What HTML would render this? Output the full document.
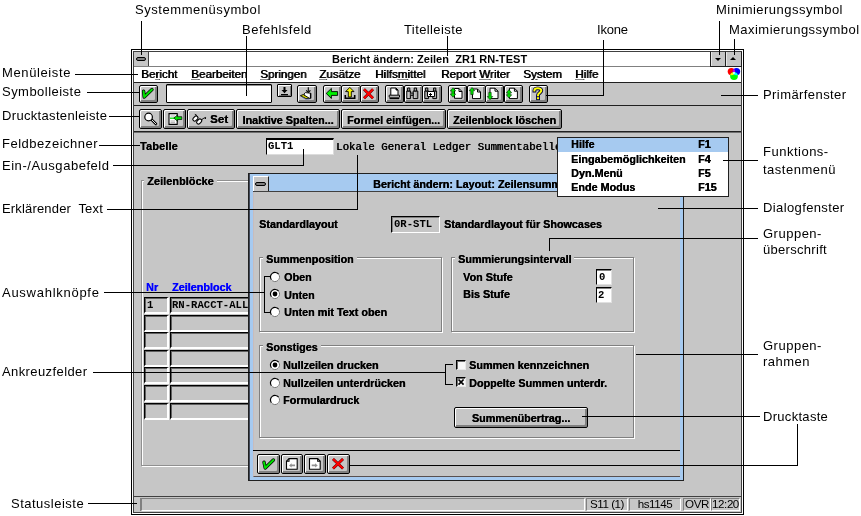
<!DOCTYPE html>
<html><head><meta charset="utf-8">
<style>
html,body{margin:0;padding:0;}
body{width:861px;height:516px;overflow:hidden;background:#fff;position:relative;font-family:"Liberation Sans",sans-serif;}
div,span,svg{position:absolute;box-sizing:border-box;}
.t,.u,.n,.m{will-change:transform;}
.u{text-shadow:0.35px 0 0 currentColor;}
.t{white-space:pre;font:13px/15px "Liberation Sans",sans-serif;color:#000;letter-spacing:0.3px;}
.u{white-space:pre;font:bold 10.8px/12px "Liberation Sans",sans-serif;color:#000;}
.n{white-space:pre;font:11.5px/12px "Liberation Sans",sans-serif;color:#000;}
.m{white-space:pre;font:bold 10.6px/13px "Liberation Mono",monospace;color:#000;}
.h{background:#000;height:1px;}
.v{background:#000;width:1px;}
.b{border:1px solid #000;border-radius:2px;background:#c6c6c6;box-shadow:inset 1px 1px #fff,inset -2px -2px #808080;}
.f{background:#fff;border-top:2px solid #000;border-left:1px solid #000;border-right:1px solid #e8e8e8;border-bottom:1px solid #e8e8e8;}
.fg{background:#c6c6c6;border-top:1px solid #000;border-left:1px solid #000;border-right:1px solid #fff;border-bottom:1px solid #fff;}
.grp{border:1px solid #808080;box-shadow:1px 1px #fff,inset 1px 1px #fff;}
.cell{background:#c6c6c6;border-top:1px solid #000;border-left:1px solid #000;border-right:2px solid #fff;border-bottom:2px solid #fff;box-shadow:inset 1px 1px #606060;}
.rad{width:10px;height:10px;border-radius:50%;background:#fff;border:1px solid;border-color:#404040 #fff #fff #404040;}
.rad.on::after{content:"";position:absolute;left:2px;top:2px;width:4px;height:4px;border-radius:50%;background:#000;}
.ul{position:relative;text-decoration:underline;text-decoration-color:#888;}
.chk{width:10px;height:10px;background:#f8f8f8;border-style:solid;border-width:1px;border-color:#000 #e8e8e8 #e8e8e8 #000;box-shadow:inset 1px 1px #707070;}
</style></head><body>
<div class="t" style="left:135px;top:2px;letter-spacing:0.55px;">Systemmenüsymbol</div>
<div class="t" style="left:242px;top:22px;letter-spacing:0.5px;">Befehlsfeld</div>
<div class="t" style="left:404px;top:22px;letter-spacing:0.4px;">Titelleiste</div>
<div class="t" style="left:597px;top:22px;letter-spacing:-0.2px;">Ikone</div>
<div class="t" style="left:716px;top:2px;letter-spacing:0.47px;">Minimierungssymbol</div>
<div class="t" style="left:729px;top:22px;letter-spacing:0.47px;">Maximierungssymbol</div>
<div class="t" style="left:2px;top:65px;letter-spacing:0.62px;">Menüleiste</div>
<div class="t" style="left:2px;top:84px;letter-spacing:0.47px;">Symbolleiste</div>
<div class="t" style="left:2px;top:108px;letter-spacing:0.33px;">Drucktastenleiste</div>
<div class="t" style="left:2px;top:136px;letter-spacing:0.52px;">Feldbezeichner</div>
<div class="t" style="left:2px;top:158px;letter-spacing:0.53px;">Ein-/Ausgabefeld</div>
<div class="t" style="left:2px;top:201px;letter-spacing:0.17px;">Erklärender  Text</div>
<div class="t" style="left:2px;top:285px;letter-spacing:0.73px;">Auswahlknöpfe</div>
<div class="t" style="left:2px;top:364px;letter-spacing:0.4px;">Ankreuzfelder</div>
<div class="t" style="left:11px;top:496px;letter-spacing:0.5px;">Statusleiste</div>
<div class="t" style="left:763px;top:87px;letter-spacing:0.42px;">Primärfenster</div>
<div class="t" style="left:763px;top:144px;letter-spacing:0.5px;">Funktions-</div>
<div class="t" style="left:763px;top:162px;letter-spacing:0.5px;">tastenmenü</div>
<div class="t" style="left:763px;top:200px;letter-spacing:0.38px;">Dialogfenster</div>
<div class="t" style="left:763px;top:226px;letter-spacing:0.5px;">Gruppen-</div>
<div class="t" style="left:763px;top:242px;letter-spacing:0.3px;">überschrift</div>
<div class="t" style="left:763px;top:338px;letter-spacing:0.5px;">Gruppen-</div>
<div class="t" style="left:763px;top:354px;letter-spacing:0.5px;">rahmen</div>
<div class="t" style="left:763px;top:409px;letter-spacing:0.3px;">Drucktaste</div>
<div class="" style="left:131px;top:49px;width:613px;height:466px;border:1px solid #000;background:#fff"></div>
<div class="" style="left:133px;top:51px;width:609px;height:462px;border:1px solid #404040;background:#c6c6c6"></div>
<div class="" style="left:134px;top:52px;width:607px;height:14px;background:#fff"></div>
<div class="h" style="left:134px;top:66px;width:607px;background:#808080"></div>
<div class="" style="left:134px;top:52px;width:15px;height:14px;background:#c6c6c6;border-right:1px solid #404040"></div>
<div class="" style="left:136px;top:57px;width:10px;height:4px;border:1px solid #000;border-radius:2px;background:#808080"></div>
<div class="u" style="left:332px;top:53px;letter-spacing:0.04px;font-size:11px;text-shadow:none">Bericht ändern: Zeilen  ZR1 RN-TEST</div>
<div class="" style="left:710px;top:51px;width:16px;height:16px;background:#c6c6c6;border:1px solid #202020;border-top-color:#404040;box-shadow:inset 1px 0 #e8e8e8"></div>
<div class="" style="left:725px;top:51px;width:17px;height:16px;background:#c6c6c6;border:1px solid #202020;border-top-color:#404040;box-shadow:inset 1px 0 #e8e8e8"></div>
<div class="" style="left:715px;top:58px;width:0px;height:0px;border-left:3.2px solid transparent;border-right:3.2px solid transparent;border-top:3.4px solid #000"></div>
<div class="" style="left:730px;top:57px;width:0px;height:0px;border-left:3.2px solid transparent;border-right:3.2px solid transparent;border-bottom:3.4px solid #000"></div>
<div class="" style="left:134px;top:67px;width:607px;height:15px;background:#fff"></div>
<div class="h" style="left:134px;top:82px;width:607px;background:#202020"></div>
<div class="u" style="left:141px;top:67.5px;font-weight:normal;font-size:11.6px;text-shadow:0.7px 0 0 #000">Be<span class="ul">r</span>icht</div>
<div class="u" style="left:190.5px;top:67.5px;font-weight:normal;font-size:11.6px;text-shadow:0.7px 0 0 #000"><span class="ul">B</span>earbeiten</div>
<div class="u" style="left:260px;top:67.5px;font-weight:normal;font-size:11.6px;text-shadow:0.7px 0 0 #000"><span class="ul">S</span>pringen</div>
<div class="u" style="left:319px;top:67.5px;font-weight:normal;font-size:11.6px;text-shadow:0.7px 0 0 #000"><span class="ul">Z</span>usätze</div>
<div class="u" style="left:375px;top:67.5px;font-weight:normal;font-size:11.6px;text-shadow:0.7px 0 0 #000">Hilfs<span class="ul">m</span>ittel</div>
<div class="u" style="left:441px;top:67.5px;font-weight:normal;font-size:11.6px;text-shadow:0.7px 0 0 #000">Report <span class="ul">W</span>riter</div>
<div class="u" style="left:523px;top:67.5px;font-weight:normal;font-size:11.6px;text-shadow:0.7px 0 0 #000">S<span class="ul">y</span>stem</div>
<div class="u" style="left:575px;top:67.5px;font-weight:normal;font-size:11.6px;text-shadow:0.7px 0 0 #000"><span class="ul">H</span>ilfe</div>
<svg style="left:727px;top:67px" width="15" height="15" viewBox="0 0 15 15"><defs><clipPath id="cr"><circle cx="4.4" cy="4.6" r="3.7" fill="#000"/></clipPath><clipPath id="cb"><circle cx="9.5" cy="4.6" r="3.7" fill="#000"/></clipPath></defs><circle cx="4.4" cy="4.6" r="3.7" fill="#ff0000"/><circle cx="9.5" cy="4.6" r="3.7" fill="#0000ff"/><circle cx="7" cy="9.1" r="3.9" fill="#00ff00"/><g clip-path="url(#cr)"><circle cx="9.5" cy="4.6" r="3.7" fill="#c000e0"/><circle cx="7" cy="9.1" r="3.9" fill="#ffff00"/></g><g clip-path="url(#cb)"><circle cx="7" cy="9.1" r="3.9" fill="#00ffff"/></g><g clip-path="url(#cr)"><g clip-path="url(#cb)"><circle cx="7" cy="9.1" r="3.9" fill="#ffffff"/></g></g></svg>
<div class="h" style="left:134px;top:105px;width:607px;background:#202020"></div>
<div class="b" style="left:139px;top:85px;width:19px;height:18px"><svg style="left:-1px;top:-1px" width="19" height="18" viewBox="0 0 19 18"><path d="M4.6 6.3 L5.2 12 L13 4.6" fill="none" stroke="#000" stroke-width="3.4" stroke-linecap="round" stroke-linejoin="round"/><path d="M4.6 6.3 L5.2 12 L13 4.6" fill="none" stroke="#00e000" stroke-width="2" stroke-linecap="round" stroke-linejoin="round"/></svg></div>
<div class="" style="left:166px;top:84px;width:106px;height:19px;background:#fff;border:1px solid #000;border-radius:1px;box-shadow:inset 0 1px #909090"></div>
<div class="" style="left:277px;top:84px;width:15px;height:13px;border:1px solid #000;border-radius:1px;background:#c6c6c6;box-shadow:inset 1px 1px #fff,inset -1px -1px #808080"><svg style="left:-1px;top:-1px" width="15" height="13" viewBox="0 0 15 13"><path d="M4.5 6 h6 l-3 3.2 z" fill="#000"/><rect x="6.5" y="3" width="2" height="3.5" fill="#000"/><rect x="4" y="10" width="7" height="1.3" fill="#000"/></svg></div>
<div class="b" style="left:297px;top:85px;width:20px;height:18px"><svg style="left:-1px;top:-1px" width="20" height="18" viewBox="0 0 20 18"><path d="M11.3 2.3 V6.6" stroke="#000" stroke-width="1.1"/><path d="M9.2 5.3 L11.3 7.5 L13.4 5.3" fill="none" stroke="#000" stroke-width="1.1"/><path d="M7 9 L8.3 7.6 L13.6 8.2 V13.4 H8.5 Z" fill="#fff" stroke="#000" stroke-width="0.9"/><path d="M13.6 8.2 V13.4" stroke="#000" stroke-width="1.4"/><path d="M3.4 10.7 L6.3 9.5 L12.4 13.3 L8.9 13.6 Z" fill="#d0d000" stroke="#000" stroke-width="0.9" stroke-linejoin="round"/><path d="M5 12.2 L8.9 14.2 L12.4 14" fill="none" stroke="#6070a0" stroke-width="0.8"/></svg></div>
<div class="b" style="left:323px;top:85px;width:19px;height:18px"><svg style="left:-1px;top:-1px" width="19" height="18" viewBox="0 0 19 18"><path d="M3.2 8.4 L8.4 3.4 V6.6 H14.6 V10.4 H8.4 V13.5 Z" fill="#00f000" stroke="#000" stroke-width="0.9" stroke-linejoin="round"/></svg></div>
<div class="b" style="left:341px;top:85px;width:20px;height:18px"><svg style="left:-1px;top:-1px" width="20" height="18" viewBox="0 0 20 18"><path d="M4.3 10 V13.3 H13.7 V10" fill="none" stroke="#000" stroke-width="1.6"/><path d="M8.8 2.4 L13 6.6 H10.3 V12 H7.3 V6.6 H4.6 Z" fill="#f8f800" stroke="#000" stroke-width="0.9" stroke-linejoin="round"/></svg></div>
<div class="b" style="left:360px;top:85px;width:19px;height:18px"><svg style="left:-1px;top:-1px" width="19" height="18" viewBox="0 0 19 18"><path d="M4 4.3 L13 13.3 M13 4.3 L4 13.3" stroke="#400000" stroke-width="2.8"/><path d="M4 4.3 L13 13.3 M13 4.3 L4 13.3" stroke="#ff0000" stroke-width="2"/></svg></div>
<div class="b" style="left:385px;top:85px;width:19px;height:18px"><svg style="left:-1px;top:-1px" width="19" height="18" viewBox="0 0 19 18"><path d="M5.8 3 H11 L13 5 V10.5 H5.8 Z" fill="#fff" stroke="#000" stroke-width="1"/><path d="M11 3 V5 H13" fill="#000" stroke="#000" stroke-width="1"/><path d="M4.2 10.2 H14.5 V12.2 H4.2 Z" fill="#fff" stroke="#000" stroke-width="1"/><path d="M4.5 13.6 H14.3" stroke="#000" stroke-width="1.2"/></svg></div>
<div class="b" style="left:404px;top:85px;width:19px;height:18px"><svg style="left:-1px;top:-1px" width="19" height="18" viewBox="0 0 19 18"><path d="M2.8 6 H6.6 V13.6 H2.8 Z M9.2 6 H13.8 V13.6 H9.2 Z" fill="#a8a8a8" stroke="#000" stroke-width="1"/><path d="M3.6 3 H5.8 V6 H3.6 Z M10.2 3 H12.6 V6 H10.2 Z" fill="#a8a8a8" stroke="#000" stroke-width="1"/><path d="M6.6 8 H9.2 V10.5 H6.6" fill="#808080" stroke="#000" stroke-width="0.8"/><path d="M4.2 7 V13 M10.8 7 V13" stroke="#e0e0e0" stroke-width="0.8"/></svg></div>
<div class="b" style="left:422px;top:85px;width:20px;height:18px"><svg style="left:-1px;top:-1px" width="20" height="18" viewBox="0 0 20 18"><path d="M2.8 6 H6.6 V13.6 H2.8 Z M10.8 6 H14.6 V13.6 H10.8 Z" fill="#a8a8a8" stroke="#000" stroke-width="1"/><path d="M3.6 3 H5.8 V6 H3.6 Z M11.6 3 H13.8 V6 H11.6 Z" fill="#a8a8a8" stroke="#000" stroke-width="1"/><path d="M5.5 6.5 H12.5 V11.5 H5.5 Z" fill="#fff" stroke="#000" stroke-width="1"/><rect x="7" y="9" width="3" height="1" fill="#000" shape-rendering="crispEdges"/><rect x="8" y="8" width="1" height="3" fill="#000" shape-rendering="crispEdges"/></svg></div>
<div class="b" style="left:448px;top:85px;width:19px;height:18px"><svg style="left:-1px;top:-1px" width="19" height="18" viewBox="0 0 19 18"><path d="M6.5 3.5 H11 L14 6.5 V13.3 H6.5 Z" fill="#fff" stroke="#000" stroke-width="1"/><path d="M11 3.5 V6.5 H14" fill="none" stroke="#000" stroke-width="1"/><path d="M5 2.8 L7.7 6.0 H6.2 V9.0 H7.7 L5 12.2 L2.3 9.0 H3.8 V6.0 H2.3 Z" fill="#00e000" stroke="#003000" stroke-width="0.6"/></svg></div>
<div class="b" style="left:467px;top:85px;width:19px;height:18px"><svg style="left:-1px;top:-1px" width="19" height="18" viewBox="0 0 19 18"><path d="M5.5 4 H10.5 L13.5 7 V13.6 H5.5 Z" fill="#fff" stroke="#000" stroke-width="1"/><path d="M10.5 4 V7 H13.5" fill="none" stroke="#000" stroke-width="1"/><path d="M5 2.5 L7.7 5.7 H6.2 V9.5 H3.8 V5.7 H2.3 Z" fill="#00e000" stroke="#003000" stroke-width="0.6"/></svg></div>
<div class="b" style="left:485px;top:85px;width:19px;height:18px"><svg style="left:-1px;top:-1px" width="19" height="18" viewBox="0 0 19 18"><path d="M5 3.2 H10 L13 6.2 V13.6 H5 Z" fill="#fff" stroke="#000" stroke-width="1"/><path d="M10 3.2 V6.2 H13" fill="none" stroke="#000" stroke-width="1"/><path d="M5 14.7 L7.7 11.5 H6.2 V7.4 H3.8 V11.5 H2.3 Z" fill="#00e000" stroke="#003000" stroke-width="0.6"/></svg></div>
<div class="b" style="left:504px;top:85px;width:19px;height:18px"><svg style="left:-1px;top:-1px" width="19" height="18" viewBox="0 0 19 18"><path d="M5.5 3.2 H10.4 L13.4 6.2 V13.6 H5.5 Z" fill="#fff" stroke="#000" stroke-width="1"/><path d="M10.4 3.2 V6.2 H13.4" fill="none" stroke="#000" stroke-width="1"/><path d="M5 4.6 L7.7 7.8 H6.2 V9.8 H7.7 L5 13 L2.3 9.8 H3.8 V7.8 H2.3 Z" fill="#00e000" stroke="#003000" stroke-width="0.6"/></svg></div>
<div class="b" style="left:529px;top:85px;width:19px;height:18px"><svg style="left:-1px;top:-1px" width="19" height="18" viewBox="0 0 19 18"><path d="M5.4 5.6 C5.4 2.6, 12.3 2.6, 12.3 5.6 C12.3 7.8, 9 8, 9 10.3" fill="none" stroke="#000040" stroke-width="3.8" stroke-linecap="square"/><path d="M9 13.2 h0.1" stroke="#000040" stroke-width="3.8" stroke-linecap="square"/><path d="M5.4 5.6 C5.4 2.6, 12.3 2.6, 12.3 5.6 C12.3 7.8, 9 8, 9 10.3" fill="none" stroke="#ffff00" stroke-width="2" stroke-linecap="square"/><path d="M9 13.2 h0.1" stroke="#ffff00" stroke-width="2" stroke-linecap="square"/></svg></div>
<div class="h" style="left:134px;top:131px;width:607px;background:#202020"></div>
<div class="h" style="left:134px;top:132px;width:607px;background:#707070"></div>
<div class="b" style="left:139px;top:109px;width:23px;height:20px"><svg style="left:-1px;top:-1px" width="23" height="20" viewBox="0 0 23 20"><path d="M12.3 10.3 L17 15" stroke="#000" stroke-width="2.6" stroke-linecap="round"/><path d="M12.3 10.3 L17 15" stroke="#fff" stroke-width="0.9" stroke-linecap="round"/><circle cx="9.6" cy="8" r="3.8" fill="#fff" stroke="#000" stroke-width="1.2"/></svg></div>
<div class="b" style="left:163px;top:109px;width:23px;height:20px"><svg style="left:-1px;top:-1px" width="23" height="20" viewBox="0 0 23 20"><path d="M6 4.6 H14.2 V15.4 H6 Z" fill="#fff" stroke="#000" stroke-width="1.1"/><path d="M7.5 7 H12 M7.5 12 H12 M7.5 13.6 H12" stroke="#a0a0a0" stroke-width="0.8"/><path d="M7 9.2 H12" stroke="#00e000" stroke-width="1.3"/><path d="M10.8 9.1 L14.6 5.9 V7.7 H18.8 V10.5 H14.6 V12.3 Z" fill="#00e000" stroke="#000" stroke-width="0.7" stroke-linejoin="round"/></svg></div>
<div class="b" style="left:187px;top:109px;width:48px;height:20px"><svg style="left:-1px;top:-1px" width="22" height="20" viewBox="0 0 22 20"><rect x="5.6" y="7.8" width="5.6" height="3.6" rx="1.6" transform="rotate(-45 8.4 9.6)" fill="#fff" stroke="#000" stroke-width="1.1"/><rect x="9.4" y="10.7" width="5.6" height="3.6" rx="1.6" transform="rotate(-45 12.2 12.5)" fill="#fff" stroke="#000" stroke-width="1.1"/><path d="M10 6.5 L7.8 5.3 M14 11.2 L16.2 9.6 L18.6 8.4 L18.4 10" fill="none" stroke="#000" stroke-width="1"/></svg></div>
<div class="u" style="left:210px;top:113px;font-size:11.6px">Set</div>
<div class="b u" style="left:236px;top:109px;width:104px;height:20px;text-align:center;padding-top:4px">Inaktive Spalten...</div>
<div class="b u" style="left:341px;top:109px;width:105px;height:20px;text-align:center;padding-top:4px">Formel einfügen...</div>
<div class="b u" style="left:447px;top:109px;width:115px;height:20px;text-align:center;padding-top:4px">Zeilenblock löschen</div>
<div class="u" style="left:140px;top:140px;letter-spacing:0.2px">Tabelle</div>
<div class="" style="left:266px;top:138px;width:68px;height:17px;background:#fff;border-top:2px solid #000;border-left:1px solid #000;border-right:1px solid #dcdcdc;border-bottom:1px solid #dcdcdc"></div>
<div class="m" style="left:268px;top:140px;">GLT1</div>
<div class="m" style="left:336px;top:141px;font-size:10.72px;font-weight:normal;text-shadow:0.45px 0 0 #000">Lokale General Ledger Summentabelle</div>
<div class="" style="left:141px;top:180px;width:130px;height:286px;border:1px solid #909090;box-shadow:inset 1px 1px #fff,1px 1px #fff"></div>
<div class="u" style="left:144px;top:175px;background:#c6c6c6;letter-spacing:0.1px"> Zeilenblöcke </div>
<div class="u" style="left:146px;top:281px;color:#0000ff">Nr</div>
<div class="u" style="left:172px;top:281px;color:#0000ff">Zeilenblock</div>
<div class="cell" style="left:144px;top:297px;width:25px;height:17px;"></div>
<div class="cell" style="left:170px;top:297px;width:95px;height:17px;"></div>
<div class="cell" style="left:144px;top:315px;width:25px;height:17px;"></div>
<div class="cell" style="left:170px;top:315px;width:95px;height:17px;"></div>
<div class="cell" style="left:144px;top:332px;width:25px;height:17px;"></div>
<div class="cell" style="left:170px;top:332px;width:95px;height:17px;"></div>
<div class="cell" style="left:144px;top:350px;width:25px;height:17px;"></div>
<div class="cell" style="left:170px;top:350px;width:95px;height:17px;"></div>
<div class="cell" style="left:144px;top:367px;width:25px;height:17px;"></div>
<div class="cell" style="left:170px;top:367px;width:95px;height:17px;"></div>
<div class="cell" style="left:144px;top:385px;width:25px;height:17px;"></div>
<div class="cell" style="left:170px;top:385px;width:95px;height:17px;"></div>
<div class="cell" style="left:144px;top:403px;width:25px;height:17px;"></div>
<div class="cell" style="left:170px;top:403px;width:95px;height:17px;"></div>
<div class="m" style="left:147px;top:299px;">1</div>
<div class="m" style="left:172px;top:299px;">RN-RACCT-ALL</div>
<div class="" style="left:248px;top:173px;width:436px;height:308px;border:1px solid #202020;background:#a6caf0;box-shadow:inset 1px 0 #404858"></div>
<div class="" style="left:253px;top:177px;width:427px;height:300px;background:#c6c6c6;border-left:1px solid #c8bcbc;border-bottom:1px solid #585050"></div>
<div class="" style="left:253px;top:176px;width:427px;height:15px;background:#a6caf0"></div>
<div class="h" style="left:253px;top:191px;width:427px;background:#404040"></div>
<div class="" style="left:253px;top:176px;width:16px;height:15px;background:#c6c6c6;border-right:1px solid #202020;border-top:1px solid #fff;border-left:1px solid #fff"></div>
<div class="" style="left:255px;top:182px;width:11px;height:4px;border:1px solid #000;border-radius:2px;background:#808080"></div>
<div class="u" style="left:373px;top:178px;">Bericht ändern: Layout: Zeilensummenposition</div>
<div class="u" style="left:259px;top:218px;">Standardlayout</div>
<div class="" style="left:391px;top:216px;width:49px;height:17px;border-top:1px solid #000;border-left:1px solid #000;border-right:1px solid #fff;border-bottom:1px solid #fff;background:#c6c6c6;box-shadow:inset 1px 1px #808080"></div>
<div class="m" style="left:394px;top:218px;">0R-STL</div>
<div class="u" style="left:444px;top:218px;">Standardlayout für Showcases</div>
<div class="" style="left:259px;top:257px;width:183px;height:75px;border:1px solid #808080;box-shadow:inset 1px 1px #fff,1px 1px #fff"></div>
<div class="u" style="left:263px;top:253px;background:#c6c6c6"> Summenposition </div>
<div class="" style="left:451px;top:257px;width:183px;height:75px;border:1px solid #808080;box-shadow:inset 1px 1px #fff,1px 1px #fff"></div>
<div class="u" style="left:455px;top:253px;background:#c6c6c6"> Summierungsintervall </div>
<div class="" style="left:259px;top:345px;width:375px;height:93px;border:1px solid #808080;box-shadow:inset 1px 1px #fff,1px 1px #fff"></div>
<div class="u" style="left:263px;top:341px;background:#c6c6c6"> Sonstiges </div>
<svg style="left:269.4px;top:271px" width="12" height="12" viewBox="0 0 12 12"><circle cx="6" cy="6" r="4.5" fill="#fff" stroke="#fff" stroke-width="1.2"/><path d="M2.4 8.8 A4.5 4.5 0 1 1 9.6 3.2" fill="none" stroke="#000" stroke-width="1.2"/><path d="M9.6 3.2 A4.5 4.5 0 0 1 2.4 8.8" fill="none" stroke="#505050" stroke-width="0.8"/></svg>
<div class="u" style="left:284px;top:271px;">Oben</div>
<svg style="left:269.4px;top:288.2px" width="12" height="12" viewBox="0 0 12 12"><circle cx="6" cy="6" r="4.5" fill="#fff" stroke="#fff" stroke-width="1.2"/><path d="M2.4 8.8 A4.5 4.5 0 1 1 9.6 3.2" fill="none" stroke="#000" stroke-width="1.2"/><path d="M9.6 3.2 A4.5 4.5 0 0 1 2.4 8.8" fill="none" stroke="#505050" stroke-width="0.8"/><circle cx="6" cy="6" r="2.4" fill="#000"/></svg>
<div class="u" style="left:284px;top:289px;">Unten</div>
<svg style="left:269.4px;top:305.8px" width="12" height="12" viewBox="0 0 12 12"><circle cx="6" cy="6" r="4.5" fill="#fff" stroke="#fff" stroke-width="1.2"/><path d="M2.4 8.8 A4.5 4.5 0 1 1 9.6 3.2" fill="none" stroke="#000" stroke-width="1.2"/><path d="M9.6 3.2 A4.5 4.5 0 0 1 2.4 8.8" fill="none" stroke="#505050" stroke-width="0.8"/></svg>
<div class="u" style="left:284px;top:306px;">Unten mit Text oben</div>
<div class="u" style="left:463px;top:271px;">Von Stufe</div>
<div class="u" style="left:463px;top:288px;">Bis Stufe</div>
<div class="" style="left:596px;top:269px;width:16px;height:16px;background:#fff;border-top:1px solid #000;border-left:1px solid #000;border-right:1px solid #e0e0e0;border-bottom:1px solid #e0e0e0;box-shadow:inset 0 1px #808080"></div>
<div class="" style="left:596px;top:287px;width:16px;height:16px;background:#fff;border-top:1px solid #000;border-left:1px solid #000;border-right:1px solid #e0e0e0;border-bottom:1px solid #e0e0e0;box-shadow:inset 0 1px #808080"></div>
<div class="m" style="left:599px;top:271px;">0</div>
<div class="m" style="left:598px;top:289px;">2</div>
<svg style="left:269.4px;top:359px" width="12" height="12" viewBox="0 0 12 12"><circle cx="6" cy="6" r="4.5" fill="#fff" stroke="#fff" stroke-width="1.2"/><path d="M2.4 8.8 A4.5 4.5 0 1 1 9.6 3.2" fill="none" stroke="#000" stroke-width="1.2"/><path d="M9.6 3.2 A4.5 4.5 0 0 1 2.4 8.8" fill="none" stroke="#505050" stroke-width="0.8"/><circle cx="6" cy="6" r="2.4" fill="#000"/></svg>
<div class="u" style="left:283px;top:359px;">Nullzeilen drucken</div>
<svg style="left:269.4px;top:376.5px" width="12" height="12" viewBox="0 0 12 12"><circle cx="6" cy="6" r="4.5" fill="#fff" stroke="#fff" stroke-width="1.2"/><path d="M2.4 8.8 A4.5 4.5 0 1 1 9.6 3.2" fill="none" stroke="#000" stroke-width="1.2"/><path d="M9.6 3.2 A4.5 4.5 0 0 1 2.4 8.8" fill="none" stroke="#505050" stroke-width="0.8"/></svg>
<div class="u" style="left:283px;top:377px;">Nullzeilen unterdrücken</div>
<svg style="left:269.4px;top:394px" width="12" height="12" viewBox="0 0 12 12"><circle cx="6" cy="6" r="4.5" fill="#fff" stroke="#fff" stroke-width="1.2"/><path d="M2.4 8.8 A4.5 4.5 0 1 1 9.6 3.2" fill="none" stroke="#000" stroke-width="1.2"/><path d="M9.6 3.2 A4.5 4.5 0 0 1 2.4 8.8" fill="none" stroke="#505050" stroke-width="0.8"/></svg>
<div class="u" style="left:283px;top:394px;">Formulardruck</div>
<div class="chk" style="left:456px;top:360px;width:10px;height:10px;"></div>
<div class="u" style="left:469px;top:359px;">Summen kennzeichnen</div>
<div class="chk" style="left:456px;top:377px;width:10px;height:10px;"><svg style="left:0px;top:0px" width="8" height="8" viewBox="0 0 8 8"><path d="M1.5 1.5 L6.6 6.6 M6.6 1.5 L1.5 6.6" stroke="#000" stroke-width="1.7"/></svg></div>
<div class="u" style="left:469px;top:377px;">Doppelte Summen unterdr.</div>
<div class="b u" style="left:454px;top:407px;width:134px;height:21px;text-align:center;padding-top:4px">Summenübertrag...</div>
<div class="h" style="left:253px;top:450px;width:427px;background:#000"></div>
<div class="b" style="left:257px;top:454px;width:23px;height:20px"><svg style="left:-1px;top:-1px" width="23" height="20" viewBox="0 0 23 20"><path d="M7 8.2 L8.2 14 L16.4 6" fill="none" stroke="#000" stroke-width="3.4" stroke-linecap="round" stroke-linejoin="round"/><path d="M7 8.2 L8.2 14 L16.4 6" fill="none" stroke="#00e000" stroke-width="2" stroke-linecap="round" stroke-linejoin="round"/></svg></div>
<div class="b" style="left:281px;top:454px;width:22px;height:20px"><svg style="left:-1px;top:-1px" width="22" height="20" viewBox="0 0 22 20"><path d="M8 4.6 H16.2 V15.3 H5.5 V7.2 Z" fill="#fff" stroke="#000" stroke-width="1.1" stroke-linejoin="round"/><path d="M8 4.6 V7.2 H5.5" fill="none" stroke="#000" stroke-width="1.1"/><path d="M8 11.4 L10.6 9.2 V10.6 H14 V12.2 H10.6 V13.6 Z" fill="#909090"/></svg></div>
<div class="b" style="left:304px;top:454px;width:22px;height:20px"><svg style="left:-1px;top:-1px" width="22" height="20" viewBox="0 0 22 20"><path d="M5.5 4.6 H13.7 L16.2 7.2 V15.3 H5.5 Z" fill="#fff" stroke="#000" stroke-width="1.1" stroke-linejoin="round"/><path d="M13.7 4.6 V7.2 H16.2" fill="none" stroke="#000" stroke-width="1.1"/><path d="M13.7 11.4 L11.1 9.2 V10.6 H7.7 V12.2 H11.1 V13.6 Z" fill="#909090"/></svg></div>
<div class="b" style="left:327px;top:454px;width:23px;height:20px"><svg style="left:-1px;top:-1px" width="23" height="20" viewBox="0 0 23 20"><path d="M6 5 L16 14.5 M16 5 L6 14.5" stroke="#400000" stroke-width="2.8"/><path d="M6 5 L16 14.5 M16 5 L6 14.5" stroke="#ff0000" stroke-width="2"/></svg></div>
<div class="" style="left:557px;top:137px;width:172px;height:60px;border:1px solid #202020;background:#fff"></div>
<div class="" style="left:558px;top:138px;width:170px;height:14px;background:#a6caf0"></div>
<div class="u" style="left:571px;top:138px;">Hilfe</div>
<div class="u" style="left:698px;top:138px;">F1</div>
<div class="u" style="left:571px;top:153px;">Eingabemöglichkeiten</div>
<div class="u" style="left:698px;top:153px;">F4</div>
<div class="u" style="left:571px;top:167px;">Dyn.Menü</div>
<div class="u" style="left:698px;top:167px;">F5</div>
<div class="u" style="left:571px;top:181px;">Ende Modus</div>
<div class="u" style="left:698px;top:181px;">F15</div>
<div class="h" style="left:134px;top:496px;width:607px;background:#404040"></div>
<div class="" style="left:134px;top:497px;width:607px;height:15px;background:#c6c6c6"></div>
<div class="" style="left:134px;top:498px;width:7px;height:13px;background:#c8c8c8;border-right:1px solid #808080"></div>
<div class="n" style="left:141px;top:498px;width:444px;height:13px;background:#c6c6c6;border-top:1px solid #808080;border-left:1px solid #808080;border-bottom:1px solid #fff;border-right:1px solid #fff;text-align:center;line-height:10px;font-size:11.6px;letter-spacing:-0.45px"></div>
<div class="n" style="left:586px;top:498px;width:42px;height:13px;background:#c6c6c6;border-top:1px solid #808080;border-left:1px solid #808080;border-bottom:1px solid #fff;border-right:1px solid #fff;text-align:center;line-height:10px;font-size:11.6px;letter-spacing:-0.45px">S11 (1)</div>
<div class="n" style="left:629px;top:498px;width:52px;height:13px;background:#c6c6c6;border-top:1px solid #808080;border-left:1px solid #808080;border-bottom:1px solid #fff;border-right:1px solid #fff;text-align:center;line-height:10px;font-size:11.6px;letter-spacing:-0.45px">hs1145</div>
<div class="n" style="left:683px;top:498px;width:28px;height:13px;background:#c6c6c6;border-top:1px solid #808080;border-left:1px solid #808080;border-bottom:1px solid #fff;border-right:1px solid #fff;text-align:center;line-height:10px;font-size:11.6px;letter-spacing:-0.45px">OVR</div>
<div class="n" style="left:711px;top:498px;width:29px;height:13px;background:#c6c6c6;border-top:1px solid #808080;border-left:1px solid #808080;border-bottom:1px solid #fff;border-right:1px solid #fff;text-align:center;line-height:10px;font-size:11.6px;letter-spacing:-0.45px">12:20</div>
<div class="v" style="left:141px;top:21px;height:34px"></div>
<div class="v" style="left:246px;top:36px;height:60px"></div>
<div class="v" style="left:447px;top:36px;height:20px"></div>
<div class="v" style="left:603px;top:40px;height:56px"></div>
<div class="h" style="left:546px;top:95px;width:58px"></div>
<div class="v" style="left:719px;top:21px;height:34px"></div>
<div class="v" style="left:734px;top:39px;height:16px"></div>
<div class="h" style="left:75px;top:74px;width:63px"></div>
<div class="h" style="left:87px;top:92px;width:52px"></div>
<div class="h" style="left:109px;top:116px;width:30px"></div>
<div class="h" style="left:99px;top:145px;width:41px"></div>
<div class="h" style="left:113px;top:165px;width:191px"></div>
<div class="v" style="left:303px;top:149px;height:17px"></div>
<div class="h" style="left:107px;top:209px;width:251px"></div>
<div class="v" style="left:357px;top:155px;height:55px"></div>
<div class="h" style="left:104px;top:292px;width:161px"></div>
<div class="v" style="left:264px;top:276px;height:37px"></div>
<div class="h" style="left:264px;top:276px;width:6px"></div>
<div class="h" style="left:264px;top:312px;width:6px"></div>
<div class="h" style="left:93px;top:372px;width:353px"></div>
<div class="v" style="left:445px;top:364px;height:21px"></div>
<div class="h" style="left:445px;top:364px;width:8px"></div>
<div class="h" style="left:445px;top:384px;width:8px"></div>
<div class="h" style="left:88px;top:503px;width:49px"></div>
<div class="h" style="left:721px;top:95px;width:37px"></div>
<div class="h" style="left:723px;top:160px;width:35px"></div>
<div class="h" style="left:658px;top:208px;width:100px"></div>
<div class="h" style="left:549px;top:238px;width:209px"></div>
<div class="v" style="left:549px;top:238px;height:13px"></div>
<div class="h" style="left:636px;top:354px;width:122px"></div>
<div class="h" style="left:582px;top:416px;width:178px"></div>
<div class="h" style="left:349px;top:465px;width:449px"></div>
<div class="v" style="left:797px;top:424px;height:42px"></div>
</body></html>
